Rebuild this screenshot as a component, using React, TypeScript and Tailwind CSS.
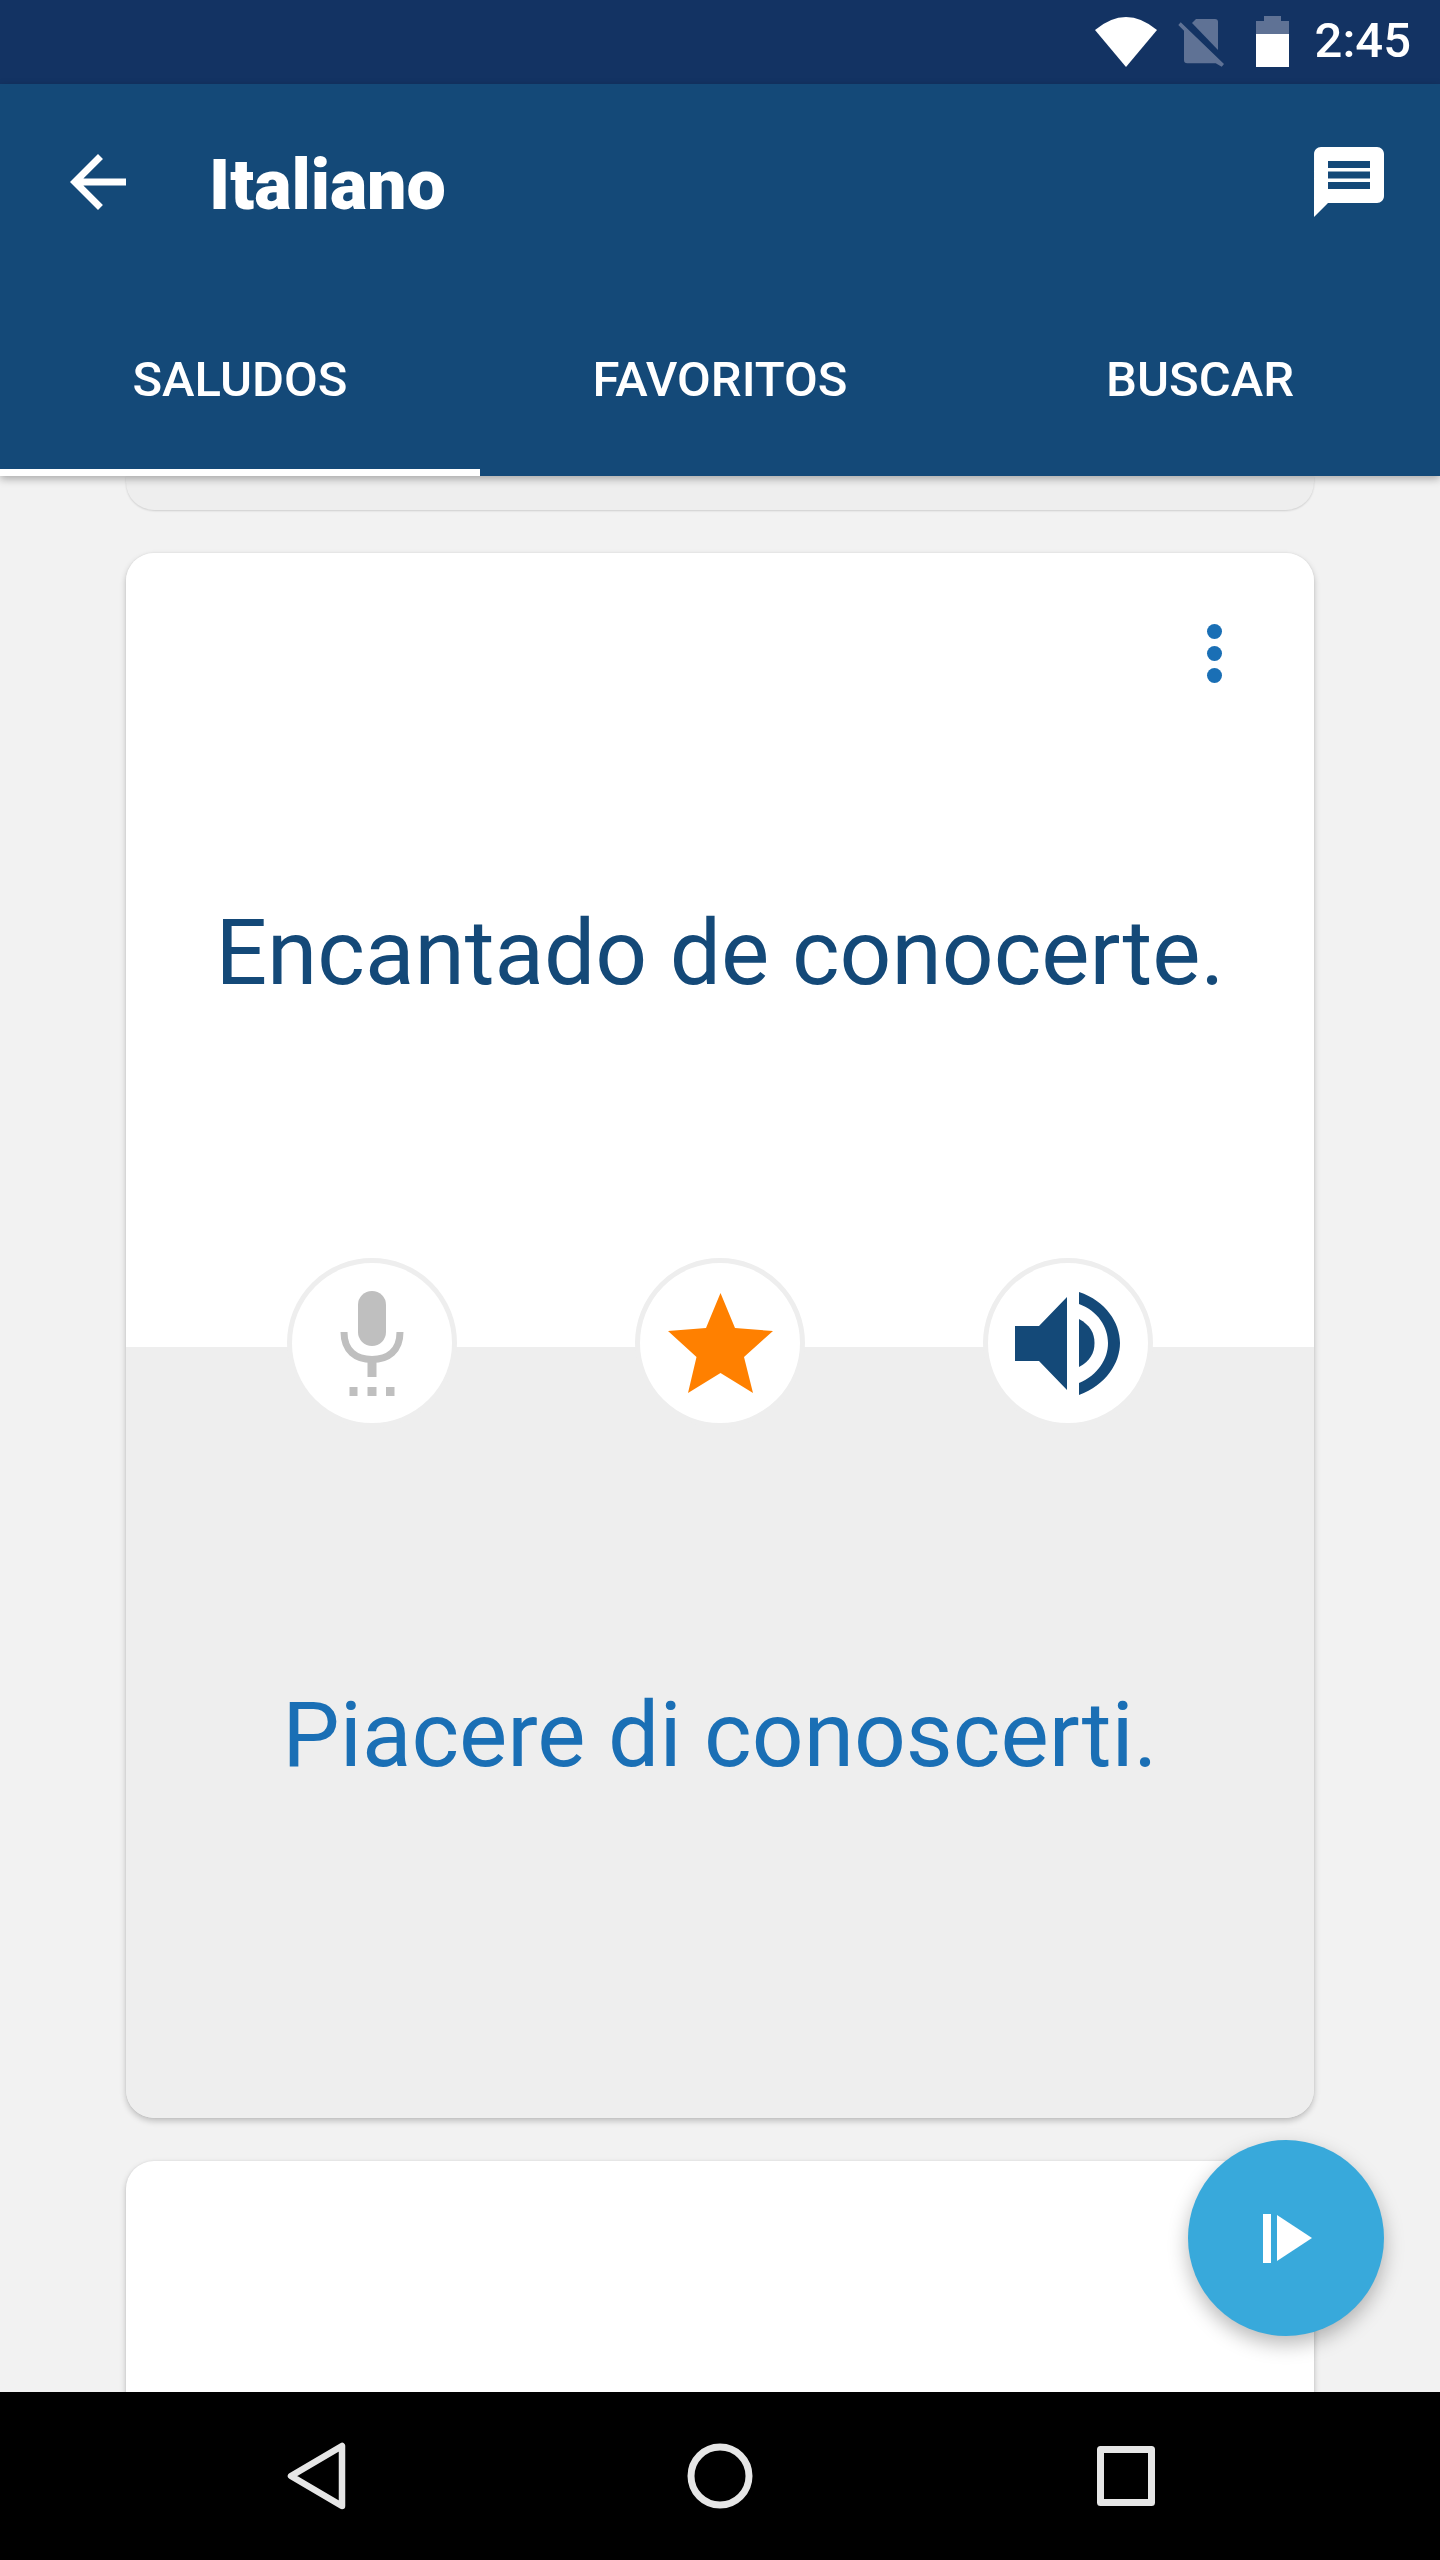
const tabs = ['SALUDOS', 'FAVORITOS', 'BUSCAR']

function StatusBar() {
  return (
    <div className="flex h-[84px] items-start justify-end bg-[#133363] pr-[29px] pt-4">
      <svg width="62" height="50" viewBox="0 0 62 50" className="mt-px">
        <path d="M0 13Q31 -13 62 13L31 50Z" fill="#fff" />
      </svg>
      <svg width="46" height="50" viewBox="0 0 46 50" className="ml-[21px] mt-px" fill="#5f7295">
        <path d="M18 2H37Q40 2 40 5V33L14 6Z" />
        <path d="M0.300 8L2.700 5.300L46 47L43.700 49.700L37.700 46.300H9.300Q6 46.300 6 43V13.700Z" />
      </svg>
      <svg width="33" height="51" viewBox="0 0 33 51" className="ml-[32px]">
        <path d="M8 0H25V5H33V18H0V5H8Z" fill="#5f7295" />
        <path d="M0 18H33V51H0Z" fill="#fff" />
      </svg>
      <span className="ml-[26px] text-[49px] font-medium leading-[50px] text-white">2:45</span>
    </div>
  )
}

function AppBar() {
  return (
    <div className="relative z-10 bg-[#144978] shadow-[0_3px_8px_rgba(0,0,0,0.3)]">
      <div className="flex h-[196px] items-center px-[56px]">
        <svg width="84" height="84" viewBox="0 0 24 24" fill="#fff">
          <path d="M20 11H7.830l5.590-5.590L12 4l-8 8 8 8 1.410-1.410L7.830 13H20v-2z" />
        </svg>
        <h1 className="ml-[69px] pt-[6px] text-[70px] font-black leading-none text-white">Italiano</h1>
        <svg width="84" height="84" viewBox="0 0 24 24" className="-mr-[7px] ml-auto" fill="#fff">
          <path d="M20 2H4c-1.1 0-1.99.9-1.99 2L2 22l4-4h14c1.1 0 2-.9 2-2V4c0-1.1-.9-2-2-2zm-2 12H6v-2h12v2zm0-3H6V9h12v2zm0-3H6V6h12v2z" />
        </svg>
      </div>
      <div className="grid h-[196px] grid-cols-3">
        {tabs.map((tab, i) => (
          <div
            key={tab}
            className={`flex items-center justify-center border-b-[7px] pt-[11px] text-[49px] font-medium text-white ${
              i === 0 ? 'border-white' : 'border-transparent'
            }`}
          >
            {tab}
          </div>
        ))}
      </div>
    </div>
  )
}

function Mic() {
  return (
    <svg width="160" height="160" viewBox="0 0 160 160" fill="#bfbfbf">
      <rect x="66" y="28" width="28" height="55" rx="14" />
      <path d="M52 69C52 88 64 96.500 80 96.500C96 96.500 108 88 108 69" fill="none" stroke="#bfbfbf" strokeWidth="7" />
      <rect x="75.500" y="96" width="9" height="18" />
      <rect x="57.500" y="124" width="8" height="9" />
      <rect x="75.500" y="124" width="9" height="9" />
      <rect x="94" y="124" width="8.500" height="9" />
    </svg>
  )
}

function Star() {
  return (
    <svg width="160" height="160" viewBox="0 0 160 160">
      <path d="M80.500 30L95 65L133 68L104 94L113 130L80.500 110L48 130L56.500 94L28 68L66 65Z" fill="#ff8000" />
    </svg>
  )
}

function Speaker() {
  return (
    <svg width="160" height="160" viewBox="0 0 160 160" fill="#144978">
      <path d="M27 63H51L79 34V127L51 98H27Z" />
      <path d="M91 56C102 62 106.500 70 106.500 80C106.500 90 102 98 91 104Z" />
      <path d="M91 29C118 38 132 60 132 80C132 100 118 122 91 132V120C110 112 120 96 120 80C120 64 110 48 91 41Z" />
    </svg>
  )
}

function Circle({ children }: { children: React.ReactNode }) {
  return (
    <div className="flex h-[170px] w-[170px] items-center justify-center rounded-full border-[5px] border-[#eeeeee] bg-white">
      {children}
    </div>
  )
}

function PhraseCard() {
  return (
    <div className="mt-[43px] overflow-hidden rounded-[28px] shadow-[0_3px_6px_rgba(0,0,0,0.22),0_0_2px_rgba(0,0,0,0.08)]">
      <div className="flex h-[794px] flex-col bg-white">
        <div className="flex flex-col items-end gap-[7px] pr-[92px] pt-[71px]">
          <span className="h-[15px] w-[15px] rounded-full bg-[#1a6fb5]" />
          <span className="h-[15px] w-[15px] rounded-full bg-[#1a6fb5]" />
          <span className="h-[15px] w-[15px] rounded-full bg-[#1a6fb5]" />
        </div>
        <p className="mt-[214px] text-center text-[91px] leading-[112px] text-[#144978]">Encantado de conocerte.</p>
      </div>
      <div className="flex h-[771px] flex-col bg-[#eeeeee]">
        <div className="-mt-[89px] flex justify-center gap-[178px]">
          <Circle><Mic /></Circle>
          <Circle><Star /></Circle>
          <Circle><Speaker /></Circle>
        </div>
        <p className="mt-[251px] text-center text-[91px] leading-[112px] text-[#1a6fb5]">Piacere di conoscerti.</p>
      </div>
    </div>
  )
}

function NavBar() {
  return (
    <div className="flex h-[168px] shrink-0 items-center justify-center bg-black pb-px">
      <svg width="62" height="70" viewBox="0 0 62 70" fill="none" stroke="#e6e6e6" strokeWidth="6.500" strokeLinejoin="round">
        <path d="M56 5V65L5 35Z" />
      </svg>
      <svg width="66" height="66" viewBox="0 0 66 66" className="ml-[339px]" fill="none" stroke="#e6e6e6" strokeWidth="7">
        <circle cx="33" cy="33" r="29" />
      </svg>
      <svg width="58" height="60" viewBox="0 0 58 60" className="ml-[344px]" fill="none" stroke="#e6e6e6" strokeWidth="7" strokeLinejoin="round">
        <rect x="3.500" y="3.500" width="51" height="53" />
      </svg>
    </div>
  )
}

export default function App() {
  return (
    <div className="relative flex h-[2560px] flex-col overflow-hidden bg-[#f2f2f2] font-[Roboto,sans-serif]">
      <StatusBar />
      <AppBar />

      <main className="min-h-0 flex-1 overflow-hidden px-[126px]">
        {/* previous card, scrolled under the tabs */}
        <div className="h-[34px] rounded-b-[28px] bg-[#eeeeee] shadow-[0_1px_2px_rgba(0,0,0,0.15)]" />
        <PhraseCard />
        <div className="mt-[43px] h-[300px] rounded-t-[28px] bg-white shadow-[0_3px_6px_rgba(0,0,0,0.22),0_0_2px_rgba(0,0,0,0.08)]" />
      </main>

      <NavBar />

      {/* Floating play button */}
      <button className="absolute left-[1188px] top-[2140px] flex h-[196px] w-[196px] items-center justify-center gap-[6px] rounded-full bg-[#38a9db] pl-[3px] shadow-[0_8px_20px_rgba(0,0,0,0.28)]">
        <span className="h-[49px] w-[8px] bg-white" />
        <svg width="35" height="46" viewBox="0 0 35 46" fill="#fff">
          <path d="M0 0L35 23L0 46Z" />
        </svg>
      </button>
    </div>
  )
}
